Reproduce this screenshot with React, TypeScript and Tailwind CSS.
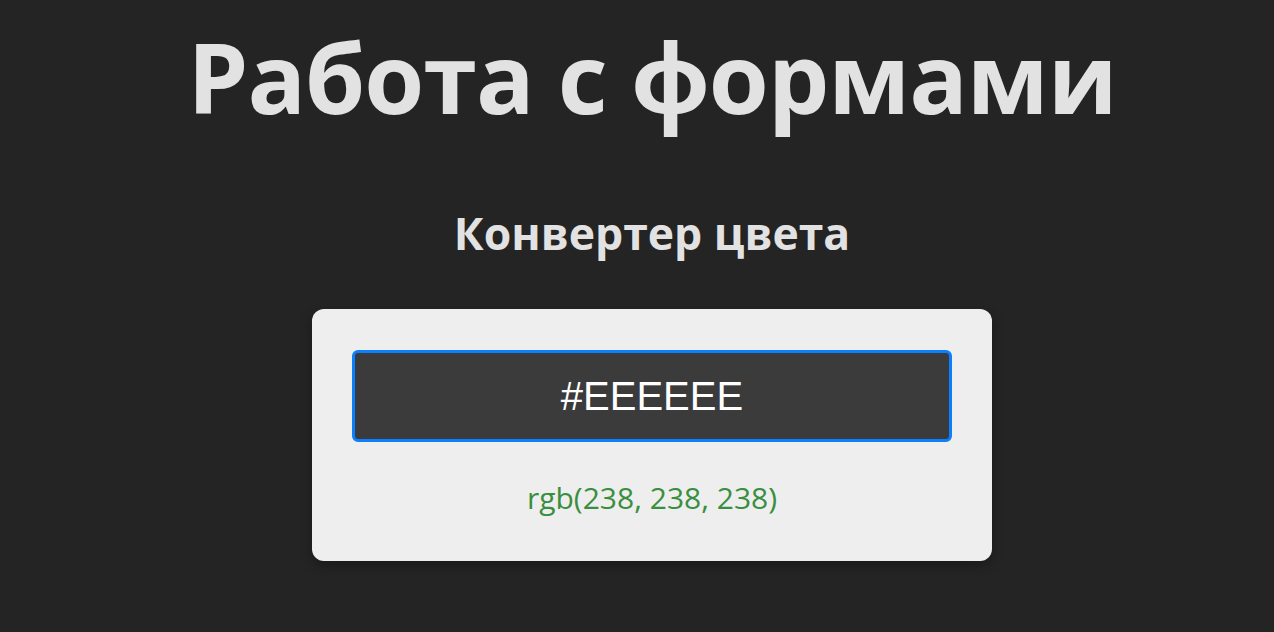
import React from "react";

export default function App() {
  return (
    <div className="min-h-[632px] w-full bg-[#242424] flex flex-col items-center pl-[30px]" style={{ fontFamily: '"Open Sans", "Noto Sans", sans-serif' }}>
      <h1 className="mt-[14px] text-[97px] leading-[124px] font-bold text-[#e2e2e2] tracking-[-1px]">Работа с формами</h1>
      <h2 className="mt-[66px] text-[44.5px] leading-[58px] font-bold text-[#e2e2e2]">Конвертер цвета</h2>
      <div className="mt-[47px] w-[680px] h-[252px] rounded-[12px] bg-[#eeeeee] shadow-[0_4px_12px_rgba(0,0,0,0.3)] px-[40px] pt-[41px] flex flex-col items-center">
        <div className="w-[600px] h-[92px] rounded-[6px] border-[3px] border-[#0a80ff] bg-[#3b3b3b] flex items-center justify-center">
          <span className="text-white text-[40px]" style={{ fontFamily: '"Liberation Sans", Arial, sans-serif' }}>#EEEEEE</span>
        </div>
        <div className="mt-[36px] text-[30px] leading-[40px] text-[#3a8f3e]">rgb(238, 238, 238)</div>
      </div>
    </div>
  );
}
